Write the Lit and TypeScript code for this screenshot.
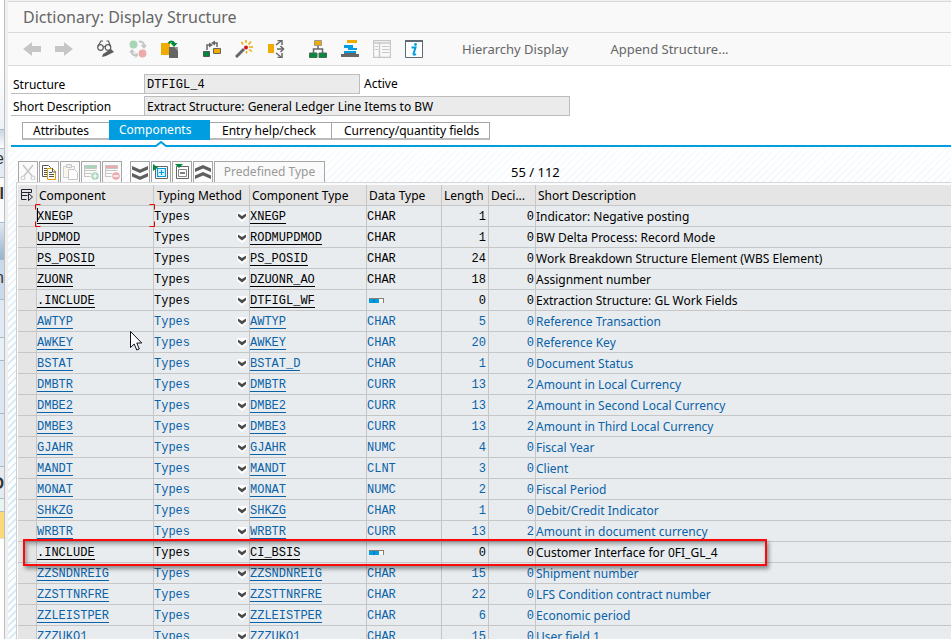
import { LitElement, html, css, svg, nothing } from "lit";
import { customElement } from "lit/decorators.js";
import { classMap } from "lit/directives/class-map.js";

interface Field {
  name: string;
  type: string;
  data: string;
  length: number;
  decimals: number;
  text: string;
  own?: boolean;
}

const f = (
  name: string, type: string, data: string, length: number, decimals: number, text: string, own = false,
): Field => ({ name, type, data, length, decimals, text, own });

const FIELDS: Field[] = [
  f("XNEGP", "XNEGP", "CHAR", 1, 0, "Indicator: Negative posting", true),
  f("UPDMOD", "RODMUPDMOD", "CHAR", 1, 0, "BW Delta Process: Record Mode", true),
  f("PS_POSID", "PS_POSID", "CHAR", 24, 0, "Work Breakdown Structure Element (WBS Element)", true),
  f("ZUONR", "DZUONR_AO", "CHAR", 18, 0, "Assignment number", true),
  f(".INCLUDE", "DTFIGL_WF", "", 0, 0, "Extraction Structure: GL Work Fields", true),
  f("AWTYP", "AWTYP", "CHAR", 5, 0, "Reference Transaction"),
  f("AWKEY", "AWKEY", "CHAR", 20, 0, "Reference Key"),
  f("BSTAT", "BSTAT_D", "CHAR", 1, 0, "Document Status"),
  f("DMBTR", "DMBTR", "CURR", 13, 2, "Amount in Local Currency"),
  f("DMBE2", "DMBE2", "CURR", 13, 2, "Amount in Second Local Currency"),
  f("DMBE3", "DMBE3", "CURR", 13, 2, "Amount in Third Local Currency"),
  f("GJAHR", "GJAHR", "NUMC", 4, 0, "Fiscal Year"),
  f("MANDT", "MANDT", "CLNT", 3, 0, "Client"),
  f("MONAT", "MONAT", "NUMC", 2, 0, "Fiscal Period"),
  f("SHKZG", "SHKZG", "CHAR", 1, 0, "Debit/Credit Indicator"),
  f("WRBTR", "WRBTR", "CURR", 13, 2, "Amount in document currency"),
  f(".INCLUDE", "CI_BSIS", "", 0, 0, "Customer Interface for 0FI_GL_4", true),
  f("ZZSNDNREIG", "ZZSNDNREIG", "CHAR", 15, 0, "Shipment number"),
  f("ZZSTTNRFRE", "ZZSTTNRFRE", "CHAR", 22, 0, "LFS Condition contract number"),
  f("ZZLEISTPER", "ZZLEISTPER", "CHAR", 6, 0, "Economic period"),
  f("ZZZUKO1", "ZZZUKO1", "CHAR", 15, 0, "User field 1"),
];

const icon = (body: unknown, size = 18) =>
  html`<svg width=${size} height=${size} viewBox="0 0 ${size} ${size}" aria-hidden="true">${body}</svg>`;

const TOOLS: { label: string; body: unknown }[][] = [
  [
    { label: "Previous object", body: svg`<path d="M0 9 9 2v4h9v6H9v4z" fill="#c6c6c6"/>` },
    { label: "Next object", body: svg`<path d="M18 9 9 2v4H0v6h9v4z" fill="#c6c6c6"/>` },
  ],
  [
    {
      label: "Display / Change",
      body: svg`<g fill="none" stroke="#5c5c5c" stroke-width="1.200"><circle cx="3.500" cy="7.500" r="2.800"/><circle cx="11" cy="7.500" r="2.800"/><path d="M6 7q1.200-1 2.400 0M.8 6.500 4 1h2M13.500 6.500 11.500 1h-2"/></g><path d="m5 17 1-3 8-5 3 3-8 4z" fill="#5c5c5c"/>`,
    },
    {
      label: "Active / Inactive",
      body: svg`<circle cx="4.500" cy="4.500" r="4" fill="#a9d5b8"/><circle cx="13.500" cy="13.500" r="3.900" fill="#ecaaaa"/><path d="M10 1.500q5 0 5 4M2.500 10.500q0 5 5 5" fill="none" stroke="#c6c6c6" stroke-width="2"/><path d="M11.500 5H18l-3 4zM0 12.500 3 9l3 3.500zM6.500 12v6l3-3z" fill="#c6c6c6"/>`,
    },
    {
      label: "Other object",
      body: svg`<path d="M0 3h9v12H0z" fill="#f0ab00"/><path d="M8 7h9v11H8z" fill="#666"/><path d="M13 7h4v4z" fill="#999"/><path d="M7.500 3.500q3-4 6 0" fill="none" stroke="#008a3b" stroke-width="2"/><path d="M9.500 3h7L13 7z" fill="#008a3b"/>`,
    },
  ],
  [
    {
      label: "Check",
      body: svg`<path d="M4 10V5h3M14 7V3h-4" fill="none" stroke="#666" stroke-width="1.500"/><path d="M6 2.500 10 5 6 7.500zM12 .5v5L8 3z" fill="#666"/><path d="M.5 11.500h6v5h-6z" fill="#008a3b" stroke="#555"/><path d="M10.500 8.500h7v5h-7z" fill="#f0ab00" stroke="#666"/>`,
    },
    {
      label: "Activate",
      body: svg`<path d="m1 17 8-8" stroke="#666" stroke-width="3"/><circle cx="11" cy="7.500" r="2" fill="#d4141c"/><path d="M11 0v3M6.500 2 8 4.500M16 1.500l-2.500 3M14 7h4M14 9.500l3 2M11.500 11v2.500" stroke="#f0ab00" stroke-width="1.500"/>`,
    },
    {
      label: "Where-used list",
      body: svg`<path d="M1 4h6v9H1z" fill="#f0ab00"/><path d="m9 5 5-4M10 9h7M9 13l5 4" stroke="#666" stroke-width="1.500"/><path d="M10.500.5H15V5M13.500 6l3 3-3 3M15 13v4.500h-4.500" fill="none" stroke="#666" stroke-width="1.500"/>`,
    },
  ],
  [
    {
      label: "Hierarchy",
      body: svg`<path d="M9 6v3M4.500 13V9h9v4" fill="none" stroke="#666" stroke-width="1.500"/><path d="M5.500.5h7v5h-7z" fill="#f0ab00" stroke="#999"/><path d="M.5 13h7.500v4.500H.5zM10 13h7.500v4.500H10z" fill="#008a3b" stroke="#4a6a50"/>`,
    },
    {
      label: "Contents",
      body: svg`<path d="M6 0h10v3H6z" fill="#f0ab00"/><path d="M3 5h9v3H3zM7 8h9v2H7zM3 11h12v2H3z" fill="#009de0"/><path d="M3 13h12v1h3v3H0v-3h3z" fill="#666"/>`,
    },
    {
      label: "Table settings",
      body: svg`<path d="M.5.5h17v17H.5zM.5 3h17M6.500 3v14" fill="none" stroke="#c6c6c6" stroke-width="1.400"/><path d="M2 6.500h3M2 9.500h3M9 6.500h7M9 9.500h7M9 12.500h7" stroke="#c6c6c6"/>`,
    },
    {
      label: "Information",
      body: svg`<path d="M.5 1h17v16.500H.5z" fill="#fff" stroke="#5f6a75"/><path d="M0 1h18" stroke="#5f6a75" stroke-width="2"/><path d="M6.500 7.500h4L8.500 14q0 1.500 2.500 0" fill="none" stroke="#009de0" stroke-width="2"/><circle cx="10.500" cy="4.500" r="1.400" fill="#009de0"/>`,
    },
  ],
];

const GRID_TOOLS: { label: string; off?: boolean; body: unknown }[][] = [
  [
    {
      label: "Cut", off: true,
      body: svg`<path d="M3 1 12 12M13 1 4 12" stroke="#c6c6c6" stroke-width="1.500"/><circle cx="3" cy="14" r="2" fill="none" stroke="#c6c6c6"/><circle cx="13" cy="14" r="2" fill="none" stroke="#c6c6c6"/>`,
    },
    {
      label: "Copy",
      body: svg`<path d="M1.500 1.500h6l2 2v9h-8z" fill="#fff" stroke="#555"/><path d="M3 4.500h3M3 6.500h3M3 8.500h3M3 10.500h3" stroke="#555"/><path d="M6.500 4.500h5l3 3v8h-8z" fill="#fff" stroke="#e0a000"/><path d="M11.500 4v4H15" fill="none" stroke="#555"/><path d="M8 8.500h3M8 10.500h5M8 12.500h5" stroke="#555"/>`,
    },
    {
      label: "Paste", off: true,
      body: svg`<path d="M1.500 2.500h11v11h-11z" fill="#fbf6ea" stroke="#d0d0d0"/><path d="M4.500.5h5v3h-5z" fill="#eee" stroke="#c6c6c6"/><path d="M6.500 5.500h6l3 3v7h-9z" fill="#fff" stroke="#c6c6c6"/>`,
    },
    {
      label: "Insert row", off: true,
      body: svg`<path d="M1.500 1.500h12v3h-12z" fill="#a9d5b8" stroke="#c6c6c6"/><path d="M1.500 6.500h12M1.500 9.500h7M1.500 12.500h6M1.500 5v8" stroke="#c6c6c6" fill="none"/><circle cx="12" cy="12" r="3.800" fill="#a9d5b8"/><path d="M9.500 12h5M12 9.500v5" stroke="#fff" stroke-width="1.200"/>`,
    },
    {
      label: "Delete row", off: true,
      body: svg`<path d="M1.500 1.500h12v3h-12z" fill="#ecaaaa" stroke="#c6c6c6"/><path d="M1.500 6.500h12M1.500 9.500h7M1.500 12.500h6M1.500 5v8" stroke="#c6c6c6" fill="none"/><circle cx="12" cy="12" r="3.800" fill="#ecaaaa"/><path d="M9.500 12h5" stroke="#fff" stroke-width="1.500"/>`,
    },
  ],
  [
    { label: "Expand all", body: svg`<path d="M0 2 8 5.500 16 2v3.500L8 9 0 5.500zM0 9l8 3.500L16 9v3.500L8 16l-8-3.500z" fill="#5f5f5f"/>` },
    {
      label: "Expand include",
      body: svg`<path d="M2.500 2.500h12v12h-12z" fill="#fff" stroke="#666"/><path d="M4.500 4.500h8v8h-8z" fill="#e2f3fb" stroke="#009de0" stroke-width="1.200"/><path d="M6 8.500h5M8.500 6v5" stroke="#009de0" stroke-width="1.200"/><path d="M0 0v7l5-3.500z" fill="#008a3b"/>`,
    },
    {
      label: "Collapse include",
      body: svg`<path d="M2.500 2.500h12v12h-12z" fill="#fff" stroke="#666"/><path d="M4.500 5.500h8v7h-8z" fill="#fff" stroke="#888"/><path d="M6 9h5" stroke="#555" stroke-width="1.500"/><path d="M1 0h8L5 4z" fill="#008a3b"/>`,
    },
    { label: "Collapse all", body: svg`<path d="M0 4.500 8 1l8 3.500V8L8 4.500 0 8zM0 11.500 8 8l8 3.500V15l-8-3.500L0 15z" fill="#5f5f5f"/>` },
  ],
];

const COLUMNS = [
  ["name", "Component"],
  ["method", "Typing Method"],
  ["type", "Component Type"],
  ["data", "Data Type"],
  ["length", "Length"],
  ["decimals", "Deci..."],
  ["text", "Short Description"],
];

@customElement("window-behind")
export class WindowBehind extends LitElement {
  static styles = css`
    :host { display: flex; flex-direction: column; overflow: hidden; background: #fff; color: #333; font: 16px/16px "Liberation Sans", sans-serif; }
    div { flex: none; border-bottom: 1px solid #a9bbcb; overflow: hidden; direction: rtl; }
    .top { height: 129px; background: linear-gradient(#fff, #fff 50%, #eef2f6); }
    .bar { height: 18px; background: linear-gradient(#c9d6e4, #fff); }
    .word { height: 29px; padding-top: 2px; background: #e5ecf3; box-sizing: border-box; }
    .head { height: 45px; padding-top: 8px; font-weight: bold; background: #fafbfc; box-sizing: border-box; }
    .blue { height: 36px; background: linear-gradient(#dfe8f2, #98b4ca); }
    .pale { height: 40px; padding-top: 10px; background: #c9dbea; box-sizing: border-box; }
    .list { height: 37px; background: #dfeaf4; }
    .row { height: 22px; background: #e9f1f8; }
    .tall { height: 52px; background: #dbe8f3; }
    .field { height: 32px; background: #e6ebf0; padding-top: 9px; box-sizing: border-box; font-weight: bold; }
    .mint { height: 12px; background: #e9f3f1; }
    .gold { height: 26px; background: #fbd977; border-color: #d9e5dc; }
  `;
  render() {
    return html`
      <div class="top"></div><div class="bar"></div><div class="word">e</div><div class="head">I</div>
      <div class="blue"></div><div class="pale">n</div><div class="list"></div><div class="row"></div>
      <div class="tall"></div><div class="tall"></div><div class="field">D</div><div class="mint"></div><div class="gold"></div>`;
  }
}

@customElement("field-grid")
export class FieldGrid extends LitElement {
  static styles = css`
    :host { display: block; position: relative; min-height: 0; overflow: hidden; padding: 2px 0 0 1px; border-top: 1px solid #d6d6d6; border-left: 1px solid #cfcfcf; background: #fafcfd; }
    table { width: 100%; table-layout: fixed; border-spacing: 0; background: #e8ecef; }
    th, td { box-sizing: border-box; height: 21px; padding: 2px 0 0; border-right: 1px solid #c6c6c6; border-bottom: 1px solid #c6c6c6; line-height: 18px; white-space: nowrap; text-align: left; font-weight: normal; overflow: hidden; }
    th { padding-left: 2px; background: #e5e5e5; }
    th:last-child, td:last-child { border-right: 0; }
    .mark { width: 19px; padding: 0; background: #e5e5e5; }
    .mark svg { display: block; margin-left: 3px; }
    .name, .type { width: 117px; }
    td.name { position: relative; overflow: visible; }
    .method { width: 96px; }
    th.method { padding-left: 3px; }
    .data { width: 75px; }
    .length, .decimals { width: 47px; }
    td.length, td.decimals { text-align: right; }
    td.length { padding-right: 2px; }
    td.decimals { padding-right: 1px; }
    .mono { font-family: "Liberation Mono", monospace; font-size: 12px; }
    tr { color: #0a62a8; }
    tr.own, thead tr { color: #000; }
    a { display: inline-block; height: 15px; line-height: 19px; color: inherit; text-decoration: none; border-bottom: 1px solid; vertical-align: top; }
    .pick { display: flex; align-items: center; height: 18px; }
    select { flex: 1; min-width: 0; appearance: none; border: 0; padding: 0; background: none; color: inherit; font: inherit; height: 18px; }
    .pick svg { flex: none; margin-right: 2px; }
    .data svg { display: block; margin: 0 0 2px 2px; }
    .corners { position: absolute; inset: -2px -2px -1px -2px; pointer-events: none; }
    .corners svg { display: block; width: 100%; height: 100%; }
    .caret { position: absolute; left: 0; top: 2px; width: 1px; height: 14px; background: #000; }
    .callout { position: absolute; left: 6px; top: 356px; width: 744px; height: 27px; box-sizing: border-box; border: 2px solid #fa0a0a; box-shadow: 2px 3px 4px #0006, inset 2px 3px 4px #0005; pointer-events: none; }
    .pointer { position: absolute; left: 113px; top: 148px; pointer-events: none; }
  `;

  private cursorFrame() {
    return html`<span class="corners"><svg viewBox="0 0 120 23" preserveAspectRatio="none" fill="none" stroke="#e00000">
      <path d="M.5 5.500v-5h5M.5 17.500v5h5M114.500.5h5v5M114.500 22.500h5v-5"/></svg></span><span class="caret"></span>`;
  }

  render() {
    return html`
      <table>
        <thead><tr>
          <th class="mark" aria-label="Select rows"><svg width="14" height="14" viewBox="0 0 14 14" fill="none" stroke="#223"><path d="M.5 1.500h10v3H.5zM.5 4.500v7h5M.5 7.500h6M7.500 5.500v7l4-3.500z"/></svg></th>
          ${COLUMNS.map(([key, label]) => html`<th class=${key} scope="col">${label}</th>`)}
        </tr></thead>
        <tbody>
          ${FIELDS.map((row, i) => html`
            <tr class=${classMap({ own: !!row.own })}>
              <td class="mark"></td>
              <td class="name mono"><a href="#component">${row.name}</a>${i === 0 ? this.cursorFrame() : nothing}</td>
              <td class="method mono"><div class="pick">
                <select aria-label="Typing method"><option>Types</option><option>Type ref to</option></select>
                <svg width="10" height="10" viewBox="0 0 10 10"><path d="M0 0h10v6L5 10 0 6z" fill="#fff"/><path d="M1 1.500 5 4l4-2.500v2.800L5 7.500 1 4.300z" fill="#4a4a4a"/></svg>
              </div></td>
              <td class="type mono"><a href="#type">${row.type}</a></td>
              <td class="data mono">${row.data || html`<svg width="15" height="5" viewBox="0 0 15 5" role="img" aria-label="Structure"><path d="M0 0h15v5H0z" fill="#8a7f78"/><path d="M0 1h5v4H0zM5 1h5v4H5z" fill="#009de0"/><path d="M10 1h4v4h-4z" fill="#fff"/><path d="M5 1v4" stroke="#0b6ea8"/></svg>`}</td>
              <td class="length mono">${row.length}</td>
              <td class="decimals mono">${row.decimals}</td>
              <td class="text">${row.text}</td>
            </tr>`)}
        </tbody>
      </table>
      <div class="callout"></div>
      <svg class="pointer" width="13" height="20" viewBox="0 0 13 20"><path d="M.5.5v16l3.700-3.500 2.600 6 2.500-1-2.500-6h5z" fill="#fff" stroke="#112"/></svg>`;
  }
}

@customElement("app-root")
export class AppRoot extends LitElement {
  static styles = css`
    :host { display: flex; height: 100vh; overflow: hidden; color: #000; font: 12px/16px "Noto Sans", sans-serif; }
    window-behind { flex: 0 0 4px; }
    main { flex: 1; min-width: 0; display: flex; flex-direction: column; border-left: 1px solid #bdbdbd; padding-left: 3px; background: #f0f0f0; }
    button { font: inherit; color: inherit; background: none; border: 0; padding: 0; margin: 0; white-space: nowrap; }
    svg { display: block; }
    h1 { margin: 1px 0 0; height: 30px; border: solid #d9d9d9; border-width: 1px 0; padding-left: 15px; background: #f9f9f9; color: #666; font-size: 16px; font-weight: normal; line-height: 30px; }
    .tools { display: flex; align-items: center; gap: 24px; height: 32px; padding-left: 15px; border-bottom: 1px solid #dcdcdc; background: #f9f9f9; color: #666; font-size: 13px; }
    .group { display: flex; gap: 14px; }
    .texts { display: flex; gap: 42px; margin-left: 15px; }
    .body { flex: 1; min-height: 0; display: flex; flex-direction: column; padding: 8px 0 0 3px;
      background: linear-gradient(#fff 40px, #fff0 300px), repeating-linear-gradient(-45deg, #d8ecf8 0 2px, #fff 2px 5px); }
    .form { display: grid; grid-template-columns: 133px minmax(0, 1fr); row-gap: 2px; }
    label { height: 19px; line-height: 22px; padding-left: 2px; border-bottom: 1px solid #bdbdbd; }
    .line { display: flex; align-items: center; gap: 4px; }
    input { box-sizing: border-box; height: 20px; width: 426px; padding: 0 2px; border: 1px solid #bdbdbd; background: #ebebeb; color: #000; font: inherit; }
    input.short { width: 216px; padding-top: 2px; font-family: "Liberation Mono", monospace; }
    .tabs { display: flex; align-items: flex-end; margin-top: 4px; padding: 0 0 5px 11px; border-bottom: 2px solid #009de0; background: #fff; }
    .tab { height: 18px; line-height: 15px; padding: 0 12px; border: 1px solid #a6a6a6; border-bottom: 2px solid #bbb; background: #fff; text-align: left; }
    .tab + .tab { border-left-width: 0; }
    .attributes { width: 87px; padding: 0 10px; border-right: 0; }
    .entry { width: 122px; }
    .quantity { width: 158px; }
    .components { position: relative; width: 101px; height: 20px; padding: 0 10px; border: 0; background: #009de0; color: #fff; line-height: 20px; }
    .notch { position: absolute; left: 47px; top: 21px; }
    .gridtools { display: flex; gap: 8px; align-items: flex-end; margin-top: 14px; padding-left: 7px; }
    .set { display: flex; gap: 1px; }
    .set button { box-sizing: border-box; width: 20px; height: 21px; padding: 2px 1px; border: 1px solid #a6a6a6; border-bottom: 0; background: #fcfcfc; }
    .set button:disabled { background: #fafafa; }
    .set .predefined { width: 111px; padding: 0; color: #999; }
    .count { flex: 1; padding-left: 178px; font-size: 13px; line-height: 20px; }
    field-grid { flex: 1; margin-left: 5px; }
  `;

  render() {
    return html`
      <window-behind aria-hidden="true"></window-behind>
      <main>
        <h1>Dictionary: Display Structure</h1>
        <div class="tools" role="toolbar">
          ${TOOLS.map((g) => html`<div class="group">${g.map((t) => html`<button aria-label=${t.label}>${icon(t.body)}</button>`)}</div>`)}
          <div class="texts"><button>Hierarchy Display</button><button>Append Structure...</button></div>
        </div>
        <div class="body">
          <div class="form">
            <label for="structure">Structure</label>
            <div class="line"><input id="structure" class="short" readonly value="DTFIGL_4" /><span>Active</span></div>
            <label for="description">Short Description</label>
            <div class="line"><input id="description" readonly value="Extract Structure: General Ledger Line Items to BW" /></div>
          </div>
          <div class="tabs" role="tablist">
            <button class="tab attributes" role="tab">Attributes</button>
            <button class="tab components" role="tab" aria-selected="true">Components
              <svg class="notch" width="10" height="6" viewBox="0 0 10 6"><path d="M0 6 5 1l5 5z" fill="#fff"/><path d="m0 5 5-4 5 4" fill="none" stroke="#009de0" stroke-width="2"/></svg>
            </button>
            <button class="tab entry" role="tab">Entry help/check</button>
            <button class="tab quantity" role="tab">Currency/quantity fields</button>
          </div>
          <div class="gridtools">
            ${GRID_TOOLS.map((g, i) => html`<div class="set">
              ${g.map((t) => html`<button aria-label=${t.label} ?disabled=${!!t.off}>${icon(t.body, 16)}</button>`)}
              ${i === 1 ? html`<button class="predefined" disabled>Predefined Type</button>` : nothing}
            </div>`)}
            <span class="count">55 / 112</span>
          </div>
          <field-grid></field-grid>
        </div>
      </main>`;
  }
}
